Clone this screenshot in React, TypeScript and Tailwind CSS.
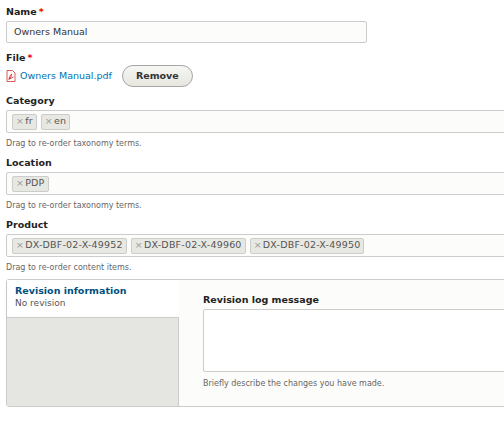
export default function App() {
  const f = { fontFamily: '"DejaVu Sans", sans-serif' };
  const tag = (t: string) => (
    <span className="inline-flex items-center h-[16px] px-[3px] border border-[#ccc] bg-[#e8e8e3] rounded-[2px] text-[9.5px] tracking-[0.2px] text-[#555] mr-[4px]">
      <span className="text-[#999] mr-[1px]">×</span>{t}
    </span>
  );
  const Label = ({ t, req }: { t: string; req?: boolean }) => (
    <div className="text-[9.5px] font-bold text-[#222] leading-[12px]">
      {t}{req && <span className="text-[#e00] ml-[2px]">*</span>}
    </div>
  );
  const TagBox = ({ tags, help }: { tags: string[]; help: string }) => (
    <>
      <div className="mt-[3px] -mr-[10px] h-[23px] border border-[#ccc] rounded-[2px] bg-[#fcfcfa] flex items-center pl-[5px]">
        {tags.map(tag)}
      </div>
      <div className="text-[8px] text-[#666] mt-[6px] leading-[10px]">{help}</div>
    </>
  );
  return (
    <div style={f} className="w-[504px] h-[422px] bg-white overflow-hidden pl-[6px] pt-[6px]">
      <Label t="Name" req />
      <div className="mt-[3px] w-[361px] h-[22px] border border-[#ccc] rounded-[2px] bg-[#fcfcfa] flex items-center px-[7px] text-[9.5px] text-[#333]">
        Owners Manual
      </div>
      <div className="mt-[9px]"><Label t="File" req /></div>
      <div className="flex items-center mt-[1px] h-[22px]">
        <svg width="10" height="12" viewBox="0 0 10 12" className="mr-[4px]">
          <path d="M1 .5h5.5L9 3v8.5H1z" fill="#fff" stroke="#c33" strokeWidth="0.8" />
          <path d="M3 9c1-3 2-5 2.5-5S5 8 3 9zM2.5 9.5L7.5 7" stroke="#c00" strokeWidth="0.7" fill="none" />
        </svg>
        <span className="text-[9.5px] text-[#0071b3]">Owners Manual.pdf</span>
        <span className="ml-[10px] h-[22px] px-[13px] rounded-full border border-[#a6a6a6] bg-gradient-to-b from-[#f6f6f3] to-[#e7e7df] flex items-center text-[9.5px] font-bold text-[#333]">
          Remove
        </span>
      </div>
      <div className="mt-[8px]"><Label t="Category" /></div>
      <TagBox tags={["fr", "en"]} help="Drag to re-order taxonomy terms." />
      <div className="mt-[8px]"><Label t="Location" /></div>
      <TagBox tags={["PDP"]} help="Drag to re-order taxonomy terms." />
      <div className="mt-[8px]"><Label t="Product" /></div>
      <TagBox tags={["DX-DBF-02-X-49952", "DX-DBF-02-X-49960", "DX-DBF-02-X-49950"]} help="Drag to re-order content items." />
      <div className="mt-[6px] -mr-[10px] h-[128px] border border-[#ccc] rounded-[3px] flex">
        <div className="w-[172px] flex flex-col">
          <div className="bg-white px-[8px] pt-[5px] pb-[8px] border-b border-[#ccc] shadow-[0_1px_2px_rgba(0,0,0,0.1)]">
            <div className="text-[9.5px] font-bold text-[#004f80] leading-[12px]">Revision information</div>
            <div className="text-[9px] text-[#555] leading-[12px]">No revision</div>
          </div>
          <div className="flex-1 bg-[#e5e5e2] border-r border-[#ccc]" />
        </div>
        <div className="flex-1 pl-[24px] pt-[14px] bg-[#fcfcfa]">
          <Label t="Revision log message" />
          <div className="mt-[3px] h-[63px] border border-[#ccc] rounded-[2px] bg-white" />
          <div className="text-[8px] text-[#666] mt-[6px]">Briefly describe the changes you have made.</div>
        </div>
      </div>
    </div>
  );
}
